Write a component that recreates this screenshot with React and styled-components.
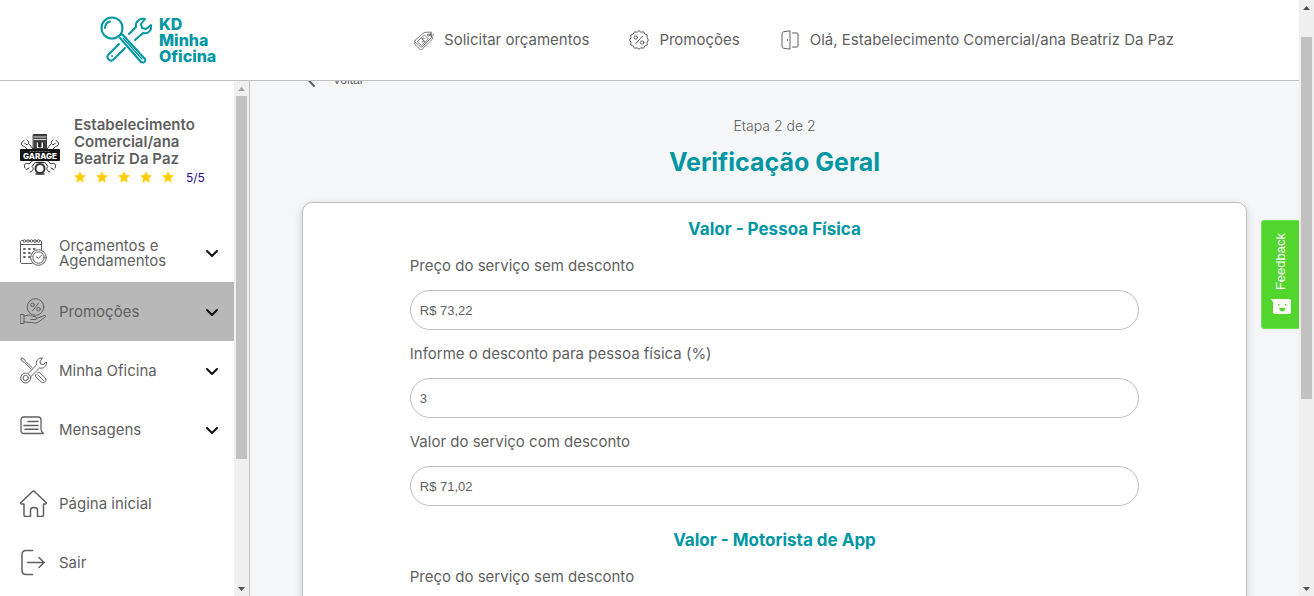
import React from "react";
import styled, { createGlobalStyle } from "styled-components";

const Global = createGlobalStyle`
  *, *::before, *::after { box-sizing: border-box; }
  body { margin: 0; font-family: Inter, sans-serif; color: #5f5f5f; background: #f4f6f8; }
  button, a { font: inherit; color: inherit; text-decoration: none; }
  button { border: 0; background: none; padding: 0; cursor: pointer; }
  h1, h2, p, ul { margin: 0; padding: 0; }
`;

const Screen = styled.div`
  display: flex;
  height: 100vh;
  overflow: hidden;
`;
const Page = styled.div`
  flex: 1;
  min-width: 0;
  display: flex;
  flex-direction: column;
`;
const Header = styled.header`
  display: flex;
  align-items: center;
  flex: none;
  height: 81px;
  padding: 0 125px 0 100px;
  background: #fff;
  border-bottom: 1px solid #bfbfbf;
`;
const Brand = styled.a`
  display: flex;
  align-items: center;
  gap: 6px;
`;
const BrandName = styled.span`
  display: flex;
  flex-direction: column;
  color: #0097a3;
  font: 800 16px/16px Inter, sans-serif;
`;
const TopNav = styled.nav`
  display: flex;
  gap: 40px;
  margin-left: auto;
`;
const TopLink = styled.a`
  display: flex;
  align-items: center;
  gap: 10px;
  font-size: 15px;
  line-height: 20px;
  white-space: nowrap;
`;
const Body = styled.div`
  display: flex;
  flex: 1;
  min-height: 0;
`;

const Sidebar = styled.aside`
  display: flex;
  flex: none;
  width: 250px;
  background: #fff;
  border-right: 1px solid #bfbfbf;
`;
const SideContent = styled.div`
  flex: 1;
  min-width: 0;
  overflow: hidden;
`;
const Profile = styled.div`
  display: flex;
  gap: 14px;
  align-items: center;
  padding: 35px 16px 36px 20px;

  > svg { margin-top: 4px; }
`;
const ProfileName = styled.p`
  font-weight: 600;
  font-size: 15px;
  line-height: 17px;
`;
const Rating = styled.a`
  display: flex;
  align-items: center;
  gap: 10px;
  height: 20px;
  font-size: 12px;
`;
const Score = styled.span`
  margin-left: 2px;
  color: #2a0a8c;
`;
const Menu = styled.ul`
  list-style: none;
`;
const itemBox = `
  display: flex;
  align-items: center;
  gap: 12px;
  width: 100%;
  height: 59px;
  padding: 0 15px 0 20px;
  text-align: left;
  font-size: 15px;
  line-height: 15px;
`;
const MenuButton = styled.button`
  && {
    ${itemBox}
    background: ${(p) => (p.$active ? "#b8b8b8" : "transparent")};
  }
`;
const MenuLink = styled.a`
  && { ${itemBox} }
`;
const MenuLabel = styled.span`
  flex: 1;
`;
const LinkGroup = styled(Menu)`
  margin-top: 15px;
`;

const Main = styled.main`
  flex: 1;
  min-width: 0;
  overflow: hidden;
  padding: 0 52px;
`;
const BackButton = styled.button`
  display: flex;
  align-items: center;
  gap: 16px;
  height: 16px;
  margin-top: -9px;
  && { font: 12px/16px "Liberation Sans", Arial, sans-serif; }
`;
const Step = styled.p`
  margin-top: 28px;
  font-size: 14px;
  font-weight: 300;
  line-height: 20px;
  text-align: center;
`;
const Title = styled.h1`
  margin-top: 11px;
  color: #0097a3;
  font-size: 25px;
  line-height: 30px;
  text-align: center;
`;
const Card = styled.form`
  margin-top: 25px;
  padding: 16px 11.3% 60px;
  background: #fff;
  border: 1px solid #bfbfbf;
  border-radius: 10px;
  box-shadow: 0 3px 8px rgba(0, 0, 0, 0.16);
`;
const Section = styled.section`
  margin-bottom: 24px;
`;
const SectionTitle = styled.h2`
  margin-bottom: 17px;
  color: #0097a3;
  font-size: 17px;
  line-height: 20px;
  text-align: center;
`;
const Field = styled.label`
  display: block;
  margin-bottom: 14px;
  font-size: 15px;
  line-height: 20px;
`;
const Input = styled.input`
  display: block;
  width: 100%;
  height: 40px;
  margin-top: 14px;
  padding: 0 9px;
  color: #5f5f5f;
  background: #fff;
  border: 1px solid #bfbfbf;
  border-radius: 20px;
  font: 13px "Liberation Sans", Arial, sans-serif;
`;

const Track = styled.div`
  display: flex;
  flex: none;
  flex-direction: column;
  width: 15px;
  background: #f0f0f0;
`;
const Arrow = styled.svg`
  flex: none;
  width: 15px;
  height: ${(p) => p.$size || 15}px;
`;
const Thumb = styled.div`
  flex: none;
  height: ${(p) => p.$length};
  margin: 0 2px;
  background: #c1c1c1;
`;
const Spacer = styled.div`
  flex: 1;
`;

const Feedback = styled.button`
  && {
    position: fixed;
    top: 220px;
    right: 15px;
    display: flex;
    flex-direction: column;
    align-items: center;
    gap: 9px;
    width: 38px;
    padding: 12px 0 14px;
    color: #fff;
    background: #52d62d;
    border: 1px solid #7be05f;
    border-right: 0;
    border-radius: 3px 0 0 3px;
    font: 13px/16px "Liberation Sans", Arial, sans-serif;
  }
`;
const FeedbackText = styled.span`
  writing-mode: vertical-rl;
  transform: rotate(180deg);
`;

const Line = styled.svg`
  flex: none;
  fill: none;
  stroke: ${(p) => p.$color || "#5f5f5f"};
  stroke-width: ${(p) => p.$weight || 1};
  stroke-linecap: round;
  stroke-linejoin: round;
`;

const Logo = () => (
  <Line width="53" height="48" viewBox="0 0 53 48" $color="#0097a3" $weight="2" aria-hidden="true">
    <circle cx="12" cy="12" r="10.5" />
    <path d="M5 12a7 7 0 0 1 5-6.500" />
    <path d="M19 20l3-2 23 25c1 3-1 4-4 3L20 22" />
    <path d="M23 22l19 21" strokeWidth="1.200" />
    <path d="M29 18l7-7c-1-5 3-9 9-8l-4 5 1 4 4 1 5-4c1 6-3 9-8 8l-8 7" />
    <path d="M19 28L8 39c-2 3 2 7 5 5l12-12M12 40l0 0" />
  </Line>
);
const TagIcon = () => (
  <Line width="20" height="20" viewBox="0 0 20 20" $weight="0.8" aria-hidden="true">
    <path d="M1 10.500L10 2.500l6-.5 1.500 5.500-9 9c-.8.800-1.400.8-2.200 0L1 12.200c-.6-.6-.6-1.100 0-1.700z" />
    <path d="M.8 12.500v1.800l4.700 4.500c1 .9 2 .9 3 0l9.800-9.500V7" />
    <path d="M3.500 11.300l7-6.300 4 4-6.800 6.300z" />
    <circle cx="14.500" cy="5" r="1.100" />
    <path d="M14.500 5H20M17.300 2v5M10.500 8.500c-1-1-2.500-.5-2 .8s2 .8 1.500 2-2 .8-2.500 0M7.500 8l3.500 4.300" />
  </Line>
);
const BadgeIcon = () => (
  <Line width="20" height="20" viewBox="0 0 20 20" $weight="1" aria-hidden="true">
    <path d="M10 .8l2 1.400 2.600-.4 1.200 2.200 2.400 1-.1 2.600L19.300 10l-1.200 2.400.1 2.600-2.400 1-1.200 2.200-2.600-.4-2 1.400-2-1.400-2.600.4L4.200 16l-2.400-1 .1-2.600L.7 10l1.200-2.400L1.800 5l2.400-1 1.200-2.200 2.600.4z" />
    <path d="M6.500 14l7-8" />
    <circle cx="6.800" cy="7.500" r="1.700" />
    <circle cx="13.200" cy="12.500" r="1.700" />
  </Line>
);
const DoorIcon = () => (
  <Line width="20" height="20" viewBox="0 0 20 20" aria-hidden="true">
    <path d="M2 3.500C2 2.500 2.500 2 3.500 1.800L10 .8v18.400l-6.500-1c-1 0-1.500-.7-1.500-1.700z" />
    <path d="M12.500 3H17c.8 0 1 .5 1 1v12c0 .8-.4 1-1 1h-4.500M7.500 9.500v1" />
  </Line>
);
const GarageLogo = () => (
  <Line width="40" height="42" viewBox="0 0 40 42" $color="#333" $weight="1" role="img" aria-label="Car Service Garage">
    <path d="M13.500 1.500h13v14h-13z" fill="#444" />
    <path d="M14 4h12M14 6.500h12" stroke="#ddd" />
    <path d="M16.500 9h7v6.500h-7z" fill="#fff" />
    <path d="M19 9h2v5h-2z" fill="#222" />
    <path d="M4 7.500c-3.500 1.500-3.500 5.500.5 6L8 17M7 7c3 2 2 5-1 4.500L4.500 10M9.500 11.500L13 16M36 7.500c3.500 1.500 3.500 5.500-.5 6L32 17M33 7c-3 2-2 5 1 4.500l1.500-1.500M30.500 11.500L27 16" />
    <path d="M5 35c-2-3.500 1-6 4-4l4-3.500M6 36.500l3-1.500M10 39c3.500-1 4-4 2-5.500l3-4M35 35c2-3.500-1-6-4-4l-4-3.500M34 36.500L31 35M30 39c-3.500-1-4-4-2-5.500l-3-4" />
    <circle cx="20" cy="35.500" r="4.500" strokeWidth="2" fill="#fff" />
    <path d="M16 29.500h8M16 41h8" strokeWidth="1.500" />
    <rect x="0" y="16" width="40" height="12" rx="1" fill="#151515" stroke="none" />
    <text x="20" y="26" textAnchor="middle" fill="#fff" stroke="none" fontFamily="Inter, sans-serif" fontWeight="800" fontSize="8">GARAGE</text>
    <path d="M10 18.500h20" stroke="#777" strokeDasharray="1 2" />
  </Line>
);
const CalendarIcon = () => (
  <Line width="27" height="27" viewBox="0 0 27 27" aria-hidden="true">
    <path d="M12 24.500H2c-1 0-1.500-.5-1.500-1.500V3c0-1 .5-1.500 1.500-1.500h18c1 0 1.500.5 1.500 1.500v8M.5 5.500h21" />
    <g fill="#fff">
      <circle cx="4.500" cy="2" r="1.300" />
      <circle cx="8" cy="2" r="1.300" />
      <circle cx="11.500" cy="2" r="1.300" />
      <circle cx="15" cy="2" r="1.300" />
      <circle cx="18.500" cy="2" r="1.300" />
    </g>
    <path d="M4 10h.8M9 10h.8M13.800 10h.8M4 14h.8M9 14h.8M4 18h.8M9 18h.8M13 14h.5" strokeWidth="2" />
    <circle cx="18.500" cy="18.500" r="7.800" fill="#fff" />
    <circle cx="18.500" cy="18.500" r="5.700" />
    <path d="M16.500 18l2 1.200 3-3" />
  </Line>
);
const HandIcon = () => (
  <Line width="27" height="27" viewBox="0 0 27 27" aria-hidden="true">
    <circle cx="15.500" cy="9" r="8.300" />
    <path d="M12.500 13l6-8" />
    <circle cx="12.500" cy="6.800" r="1.800" />
    <circle cx="18.500" cy="11.200" r="1.800" />
    <path d="M.5 16.500H4v9H.5zM4 18l5-1c2 0 3 1.500 5 1.500 3 0 3.500 3 1 3h-4M16.500 20.500l6.500-2.500c3-1 3.500 0 1.500 1.500l-6 4.500c-2 1.500-5 1-7 .5L4 24" />
  </Line>
);
const ToolsIcon = () => (
  <Line width="27" height="27" viewBox="0 0 27 27" aria-hidden="true">
    <path d="M8.500 16l8-8c-1-4 2-7.500 6-7l-2.500 3 .5 3 3 .5 3-2.500c.6 4-3 7-7 6l-8.500 8.500" />
    <circle cx="5.700" cy="21" r="5" />
    <circle cx="5.700" cy="21" r="2.600" />
    <path d="M10.500 11.500L4.500 5.500 2.500 4.500.800 1.800l1.200-1L4.500 2.500l1 2 6.500 6M16 17.500l-.8 1.500 6 6c2.500 2 6.500-1.500 4-4l-6-6-1.500.8M18 18l5.500 5.500" />
  </Line>
);
const MessageIcon = () => (
  <Line width="27" height="27" viewBox="0 0 27 27" $weight="1.300" aria-hidden="true">
    <path d="M4 1h14c2 0 3 1 3 3v9c.2 2 1 3.500 2.500 4.500H4c-2 0-3-1-3-3V4c0-2 1-3 3-3z" />
    <path d="M8 5.500h10M4 9.500h14M5 13.300h13" strokeWidth="1.600" />
  </Line>
);
const HomeIcon = () => (
  <Line width="27" height="27" viewBox="0 0 27 27" $weight="1.500" aria-hidden="true">
    <path d="M4 14H2c-1.500 0-1.700-.7-.7-1.700L12.500 1.500c.7-.7 1.300-.7 2 0l11.200 10.800c1 1 .8 1.700-.7 1.700h-1.500v11c0 1-.5 1.500-1.500 1.500h-4.500v-6.500c0-3.200-7-3.200-7 0v6.500H5.500C4.500 26.500 4 26 4 25z" />
  </Line>
);
const ExitIcon = () => (
  <Line width="27" height="27" viewBox="0 0 27 27" $weight="1.500" aria-hidden="true">
    <path d="M12.500 1.500H6c-2.500 0-4 1.500-4 4v16c0 2.500 1.500 4 4 4h6.500M7.500 13.500h17M19 8.500l5 5-5 5" />
  </Line>
);
const Chevron = () => (
  <Line width="14" height="14" viewBox="0 0 14 14" $color="#111" $weight="2" aria-hidden="true">
    <path d="M2 5l5 5 5-5" />
  </Line>
);
const Star = () => (
  <svg width="12" height="12" viewBox="0 0 12 12" fill="#ffce00" aria-hidden="true">
    <path d="M6 0l1.700 4L12 4.400 8.800 7.300l.9 4.400L6 9.400l-3.700 2.300.9-4.400L0 4.400 4.300 4z" />
  </svg>
);

const sections = [
  { icon: CalendarIcon, label: "Orçamentos e Agendamentos" },
  { icon: HandIcon, label: "Promoções", active: true },
  { icon: ToolsIcon, label: "Minha Oficina" },
  { icon: MessageIcon, label: "Mensagens" },
];

function ScrollBar({ length, offset, idleTop }) {
  return (
    <Track aria-hidden="true">
      <Arrow viewBox="0 0 15 15" $size={offset ? 37 : 15} preserveAspectRatio="xMidYMin">
        <path d="M4 10l3.500-4 3.500 4z" fill={idleTop ? "#a3a3a3" : "#505050"} />
      </Arrow>
      <Thumb $length={length} />
      <Spacer />
      <Arrow viewBox="0 0 15 15">
        <path d="M4 6l3.500 4L11 6z" fill="#505050" />
      </Arrow>
    </Track>
  );
}

export default function App() {
  return (
    <Screen>
      <Global />
      <Page>
        <Header>
          <Brand href="#">
            <Logo />
            <BrandName>
              <span>KD</span>
              <span>Minha</span>
              <span>Oficina</span>
            </BrandName>
          </Brand>
          <TopNav>
            <TopLink href="#"><TagIcon />Solicitar orçamentos</TopLink>
            <TopLink href="#"><BadgeIcon />Promoções</TopLink>
            <TopLink href="#"><DoorIcon />Olá, Estabelecimento Comercial/ana Beatriz Da Paz</TopLink>
          </TopNav>
        </Header>
        <Body>
          <Sidebar>
            <SideContent>
              <Profile>
                <GarageLogo />
                <div>
                  <ProfileName>Estabelecimento Comercial/ana Beatriz Da Paz</ProfileName>
                  <Rating href="#">
                    {[1, 2, 3, 4, 5].map((n) => <Star key={n} />)}
                    <Score>5/5</Score>
                  </Rating>
                </div>
              </Profile>
              <Menu>
                {sections.map(({ icon: Icon, label, active }) => (
                  <li key={label}>
                    <MenuButton type="button" $active={active}>
                      <Icon />
                      <MenuLabel>{label}</MenuLabel>
                      <Chevron />
                    </MenuButton>
                  </li>
                ))}
              </Menu>
              <LinkGroup>
                <li><MenuLink href="#"><HomeIcon />Página inicial</MenuLink></li>
                <li><MenuLink href="#"><ExitIcon />Sair</MenuLink></li>
              </LinkGroup>
            </SideContent>
            <ScrollBar length="70.5%" idleTop />
          </Sidebar>
          <Main>
            <BackButton type="button">
              <Line width="15" height="15" viewBox="0 0 15 15" $weight="2" aria-hidden="true">
                <path d="M12 2L7 7.500l5 5.500" />
              </Line>
              Voltar
            </BackButton>
            <Step>Etapa 2 de 2</Step>
            <Title>Verificação Geral</Title>
            <Card>
              <Section>
                <SectionTitle>Valor - Pessoa Física</SectionTitle>
                <Field>Preço do serviço sem desconto<Input defaultValue="R$ 73,22" /></Field>
                <Field>Informe o desconto para pessoa física (%)<Input defaultValue="3" /></Field>
                <Field>Valor do serviço com desconto<Input defaultValue="R$ 71,02" /></Field>
              </Section>
              <Section>
                <SectionTitle>Valor - Motorista de App</SectionTitle>
                <Field>Preço do serviço sem desconto<Input defaultValue="R$ 73,22" /></Field>
              </Section>
            </Card>
          </Main>
        </Body>
      </Page>
      <ScrollBar length="60.7%" offset />
      <Feedback type="button">
        <FeedbackText>Feedback</FeedbackText>
        <svg width="20" height="15" viewBox="0 0 20 15" aria-hidden="true">
          <path d="M0 0h18q2 0 2 2v11q0 2-2 2H4q-2 0-2-2V3z" fill="#fff" />
          <path d="M7 5h1.500v1.500H7zM14 5h1.500v1.500H14zM8 9h6.500q-1 3.500-3.200 3.500T8 9z" fill="#52d62d" />
        </svg>
      </Feedback>
    </Screen>
  );
}
